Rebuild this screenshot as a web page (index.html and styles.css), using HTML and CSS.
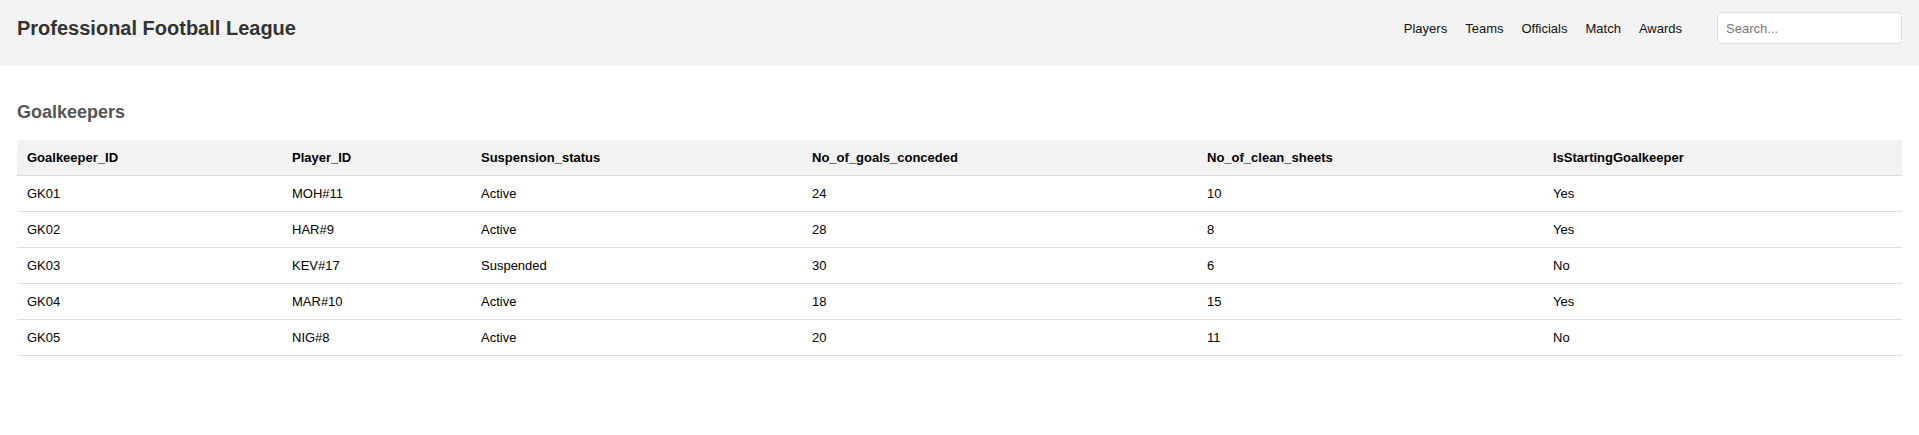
FILE: index.html
```html
<!DOCTYPE html>
<html lang="en">
<head>
<meta charset="utf-8">
<title>Professional Football League</title>
<link rel="stylesheet" href="styles.css">
</head>
<body>
<header class="topbar">
  <h1 class="brand">Professional Football League</h1>
  <div class="topbar-right">
    <nav class="nav">
      <a href="#">Players</a>
      <a href="#">Teams</a>
      <a href="#">Officials</a>
      <a href="#">Match</a>
      <a href="#">Awards</a>
    </nav>
    <input class="search" type="text" placeholder="Search...">
  </div>
</header>
<main class="content">
  <h2 class="section-title">Goalkeepers</h2>
  <table class="data">
    <colgroup>
      <col class="c1"><col class="c2"><col class="c3"><col class="c4"><col class="c5"><col class="c6">
    </colgroup>
    <thead>
      <tr>
        <th>Goalkeeper_ID</th>
        <th>Player_ID</th>
        <th>Suspension_status</th>
        <th>No_of_goals_conceded</th>
        <th>No_of_clean_sheets</th>
        <th>IsStartingGoalkeeper</th>
      </tr>
    </thead>
    <tbody>
      <tr><td>GK01</td><td>MOH#11</td><td>Active</td><td>24</td><td>10</td><td>Yes</td></tr>
      <tr><td>GK02</td><td>HAR#9</td><td>Active</td><td>28</td><td>8</td><td>Yes</td></tr>
      <tr><td>GK03</td><td>KEV#17</td><td>Suspended</td><td>30</td><td>6</td><td>No</td></tr>
      <tr><td>GK04</td><td>MAR#10</td><td>Active</td><td>18</td><td>15</td><td>Yes</td></tr>
      <tr><td>GK05</td><td>NIG#8</td><td>Active</td><td>20</td><td>11</td><td>No</td></tr>
    </tbody>
  </table>
</main>
</body>
</html>
```

FILE: styles.css
```css
* { box-sizing: border-box; }
html, body {
  margin: 0;
  padding: 0;
  background: #ffffff;
  font-family: "Liberation Sans", Arial, sans-serif;
  color: #000;
}
.topbar {
  display: flex;
  align-items: center;
  justify-content: space-between;
  height: 66px;
  padding: 12px 17px 22px 17px;
  background: #f3f3f3;
}
.brand {
  margin: 0;
  font-size: 20px;
  font-weight: bold;
  color: #333333;
  line-height: 23px;
}
.topbar-right {
  display: flex;
  align-items: center;
}
.nav {
  display: flex;
  gap: 18px;
  margin-right: 35px;
}
.nav a {
  font-size: 13px;
  color: #111111;
  text-decoration: none;
}
.search {
  width: 185px;
  height: 32px;
  padding: 0 8px;
  border: 1px solid #dddddd;
  border-radius: 4px;
  background: #ffffff;
  font-family: "Liberation Sans", Arial, sans-serif;
  font-size: 13px;
  color: #333;
}
.search::placeholder { color: #777777; }
.content {
  padding: 36px 17px 0 17px;
}
.section-title {
  margin: 0 0 17px 0;
  font-size: 18px;
  line-height: 21px;
  font-weight: bold;
  color: #555555;
}
.data {
  width: 100%;
  border-collapse: collapse;
  table-layout: fixed;
  font-size: 13px;
}
.data th, .data td {
  text-align: left;
  padding: 10px;
  line-height: 15px;
  border-bottom: 1px solid #dddddd;
}
.data th {
  background: #f2f2f2;
  font-weight: bold;
  color: #000;
}
.data td { color: #000; }
.c1 { width: 265px; }
.c2 { width: 189px; }
.c3 { width: 331px; }
.c4 { width: 395px; }
.c5 { width: 346px; }
.c6 { width: 359px; }
```
